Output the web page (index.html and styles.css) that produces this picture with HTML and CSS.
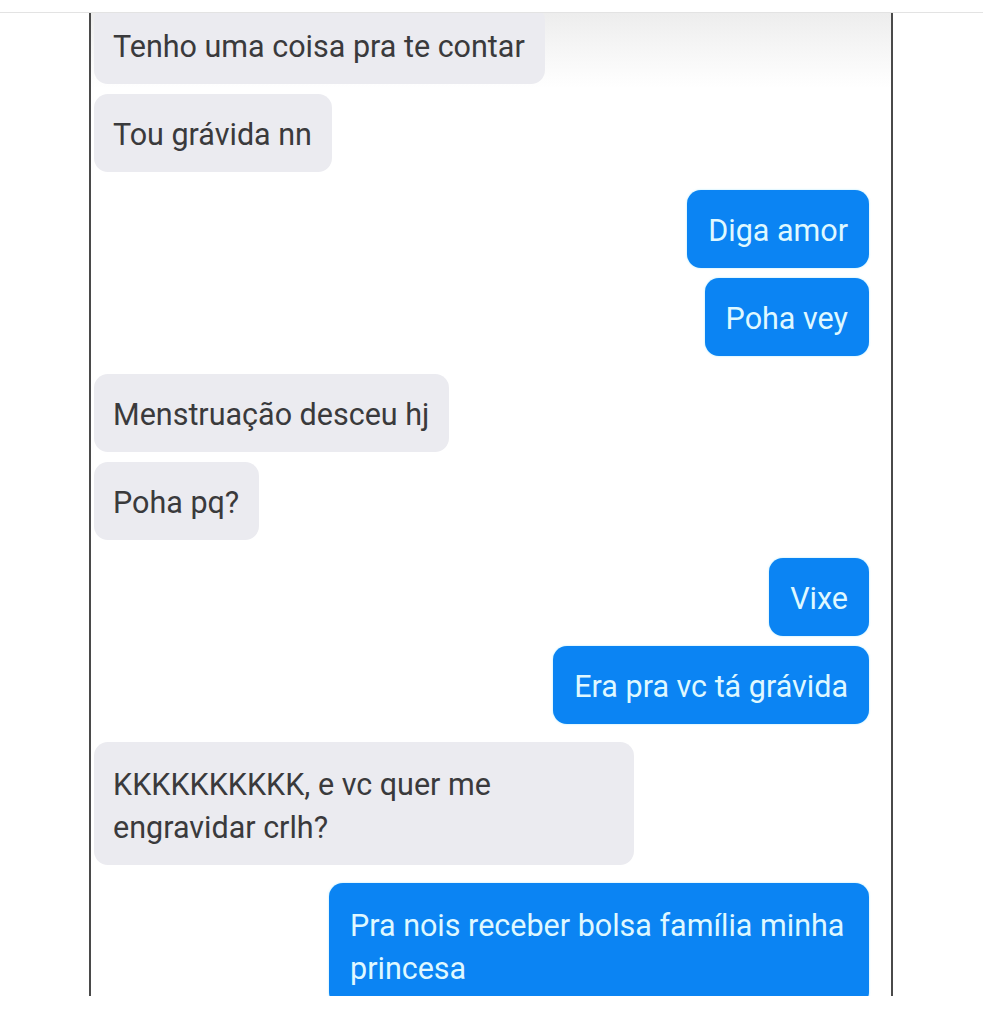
FILE: index.html
```html
<!DOCTYPE html>
<html lang="pt">
<head>
<meta charset="utf-8">
<title>Chat</title>
<link rel="stylesheet" href="styles.css">
</head>
<body>
<div class="topbar"></div>
<div class="frame">
  <div class="chat">
    <div class="group in first">
      <div class="bubble">Tenho uma coisa pra te contar</div>
      <div class="bubble">Tou grávida nn</div>
    </div>
    <div class="group out">
      <div class="bubble">Diga amor</div>
      <div class="bubble">Poha vey</div>
    </div>
    <div class="group in">
      <div class="bubble">Menstruação desceu hj</div>
      <div class="bubble">Poha pq?</div>
    </div>
    <div class="group out">
      <div class="bubble">Vixe</div>
      <div class="bubble">Era pra vc tá grávida</div>
    </div>
    <div class="group in">
      <div class="bubble multi">KKKKKKKKKK, e vc quer me<br>engravidar crlh?</div>
    </div>
    <div class="group out">
      <div class="bubble multi">Pra nois receber bolsa família minha<br>princesa</div>
    </div>
  </div>
</div>
</body>
</html>
```
FILE: styles.css
```css
html, body {
  margin: 0;
  padding: 0;
  background: #ffffff;
}

body {
  font-family: Roboto, "Noto Sans", "Liberation Sans", sans-serif;
}

.topbar {
  height: 12px;
  border-bottom: 1px solid #e3e3e3;
}

.frame {
  margin-left: 89px;
  width: 800px;
  height: 983px;
  border-left: 2px solid #4a4a4a;
  border-right: 2px solid #4a4a4a;
  overflow: hidden;
  background: linear-gradient(180deg, #ededed 0px, #f7f7f7 40px, #ffffff 75px);
}

.chat {
  display: flex;
  flex-direction: column;
  gap: 18px;
  padding: 0 22px 0 3px;
  margin-top: -7px;
}

.group {
  display: flex;
  flex-direction: column;
  gap: 10px;
}

.group.in {
  align-items: flex-start;
}

.group.out {
  align-items: flex-end;
}

.bubble {
  box-sizing: border-box;
  border-radius: 14px;
  padding: 19px 20px 15px 19px;
  font-size: 30.5px;
  line-height: 44px;
}

.in .bubble {
  background: #ebebf0;
  color: #3a3a3c;
}

.out .bubble {
  background: #0b84f3;
  color: #dff8ff;
  padding: 19px 21px 15px;
  box-shadow: 0 0 2px rgba(120, 220, 255, 0.7);
}

.bubble.multi {
  width: 540px;
  padding-top: 21px;
  padding-bottom: 16px;
  line-height: 43px;
}
```
